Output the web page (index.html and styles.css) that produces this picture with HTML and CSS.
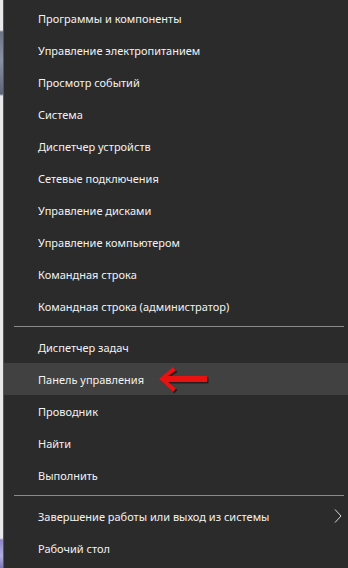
FILE: index.html
```html
<!DOCTYPE html>
<html lang="ru">
<head>
<meta charset="utf-8">
<link rel="stylesheet" href="styles.css">
</head>
<body>
<div class="screen">
  <div class="desk"></div>
  <div class="menu">
    <div class="item">Программы и компоненты</div>
    <div class="item">Управление электропитанием</div>
    <div class="item">Просмотр событий</div>
    <div class="item">Система</div>
    <div class="item">Диспетчер устройств</div>
    <div class="item">Сетевые подключения</div>
    <div class="item">Управление дисками</div>
    <div class="item">Управление компьютером</div>
    <div class="item">Командная строка</div>
    <div class="item">Командная строка (администратор)</div>
    <div class="sep"></div>
    <div class="item">Диспетчер задач</div>
    <div class="item active">Панель управления
      <svg class="arrow" width="60" height="32" viewBox="0 0 60 32">
        <path d="M5 16 L19 4 L22 7.5 L14 13 L53 13 L53 19 L14 19 L22 25.5 L19 29 Z" fill="#140000" opacity="0.55" transform="translate(1.5,1.5)"/>
        <path d="M5 16 L19 4 L22 7.5 L14 13 L53 13 L53 19 L14 19 L22 25.5 L19 29 Z" fill="#ea1111"/>
      </svg>
    </div>
    <div class="item">Проводник</div>
    <div class="item">Найти</div>
    <div class="item">Выполнить</div>
    <div class="sep"></div>
    <div class="item sub">Завершение работы или выход из системы
      <svg class="chev" width="8" height="14" viewBox="0 0 8 14"><path d="M1 0.5 L7 7 L1 13.5" fill="none" stroke="#d8d8d8" stroke-width="1"/></svg>
    </div>
    <div class="item">Рабочий стол</div>
  </div>
</div>
</body>
</html>
```
FILE: styles.css
```css
html, body {
  margin: 0;
  padding: 0;
  width: 348px;
  height: 568px;
  overflow: hidden;
  background: #2b2b2b;
}
.screen {
  display: flex;
  height: 568px;
}
.desk {
  width: 3px;
  flex: none;
  background: linear-gradient(to bottom,
    #e9e9ec 0px, #e9e9ec 30px,
    #6d7384 32px, #8a93a6 60px, #5d6476 94px,
    #e9e9ec 96px, #e9e9ec 538px,
    #8d86c4 540px, #b3aee0 556px, #7a73b5 568px);
  border-right: 1px solid #55565a;
}
.menu {
  flex: 1;
  background: #2b2b2b;
  padding-top: 2px;
  font-family: "Noto Sans", sans-serif;
  font-size: 11px;
  color: #f2f2f2;
}
.item {
  position: relative;
  height: 32px;
  display: flex;
  align-items: center;
  padding-left: 34px;
}
.item.active {
  background: #414141;
}
.sep {
  height: 9px;
  display: flex;
  align-items: center;
  padding: 0 4px 0 10px;
}
.sep::before {
  content: "";
  flex: 1;
  height: 1px;
  background: #8a8a8a;
}
.arrow {
  position: absolute;
  left: 150px;
  top: 0;
}
.chev {
  position: absolute;
  right: 6px;
  top: 9px;
}
```
